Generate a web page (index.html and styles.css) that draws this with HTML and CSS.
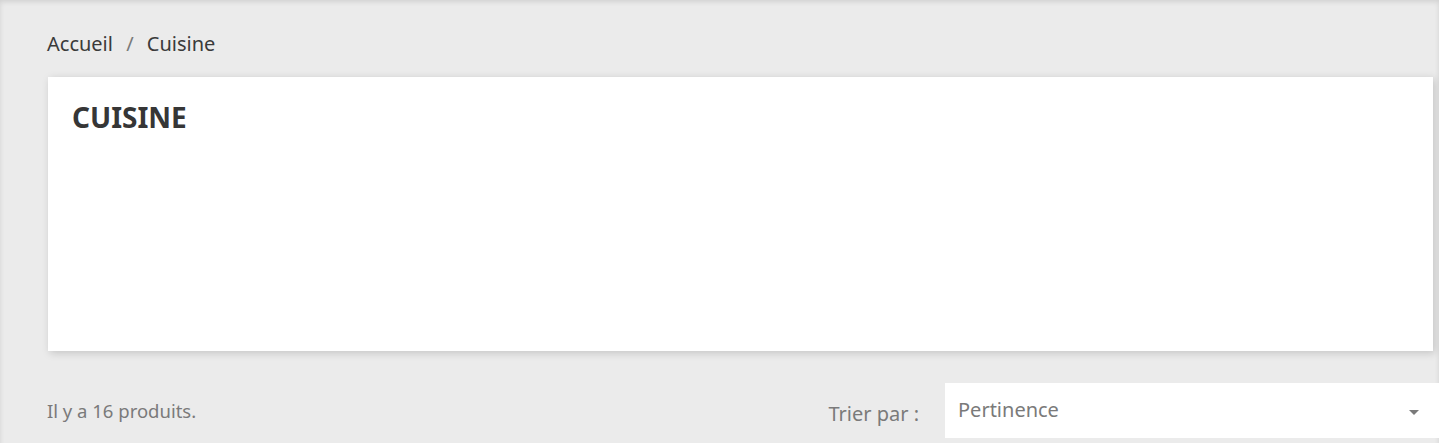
FILE: index.html
```html
<!DOCTYPE html>
<html lang="fr">
<head>
    <meta charset="UTF-8">
    <meta name="viewport" content="width=device-width, initial-scale=1.0">
    <title>Cuisine</title>
    <link rel="stylesheet" href="styles.css">
</head>
<body>

    <div class="wrapper">
        <nav class="breadcrumb">
            <a href="#">Accueil</a>
            <span class="sep">/</span>
            <span>Cuisine</span>
        </nav>

        <div class="block-category">
            <h1>Cuisine</h1>
        </div>

        <div class="products-top">
            <p class="total">Il y a 16 produits.</p>
            <div class="sort-by">
                <span class="sort-label">Trier par :</span>
                <div class="select-title">
                    Pertinence
                    <svg class="arrow" width="10" height="5" viewBox="0 0 10 5"><path d="M0 0h10L5 5z" fill="#7a7a7a"/></svg>
                </div>
            </div>
        </div>
    </div>

</body>
</html>
```

FILE: styles.css
```css
body {
    font-family: 'Noto Sans', sans-serif;
    background-color: #ebebeb;
    margin: 0;
    overflow: hidden;
}

.wrapper {
    box-shadow: inset 0 2px 5px 0 rgba(0, 0, 0, 0.11);
    padding: 32px 6px 10px 47px;
    min-height: 443px;
    box-sizing: border-box;
}

.breadcrumb {
    font-size: 20px;
    line-height: 24px;
    color: #3a3a3a;
    margin-bottom: 21px;
}

.breadcrumb a {
    color: #3a3a3a;
    text-decoration: none;
}

.breadcrumb .sep {
    color: #7a7a7a;
    margin: 0 8px;
}

.block-category {
    background: white;
    box-shadow: 2px 2px 8px 0 rgba(0, 0, 0, 0.17);
    height: 274px;
    box-sizing: border-box;
    padding: 20px 24px;
    margin-left: 1px;
}

.block-category h1 {
    margin: 0;
    font-size: 28px;
    font-weight: 700;
    text-transform: uppercase;
    color: #363636;
    line-height: 40px;
}

.products-top {
    display: flex;
    align-items: center;
    justify-content: space-between;
    margin-top: 32px;
    margin-right: -6px;
}

.total {
    margin: 0;
    font-size: 18.5px;
    color: #7a7a7a;
}

.sort-by {
    display: flex;
    align-items: center;
}

.sort-label {
    font-size: 20px;
    color: #7a7a7a;
    margin-right: 26px;
    padding-top: 6px;
}

.select-title {
    width: 494px;
    height: 55px;
    box-sizing: border-box;
    background: white;
    display: flex;
    align-items: center;
    justify-content: space-between;
    padding: 0 20px 0 13px;
    font-size: 20px;
    color: #7a7a7a;
    padding-bottom: 3px;
}

.arrow {
    margin-top: 6px;
}
```
